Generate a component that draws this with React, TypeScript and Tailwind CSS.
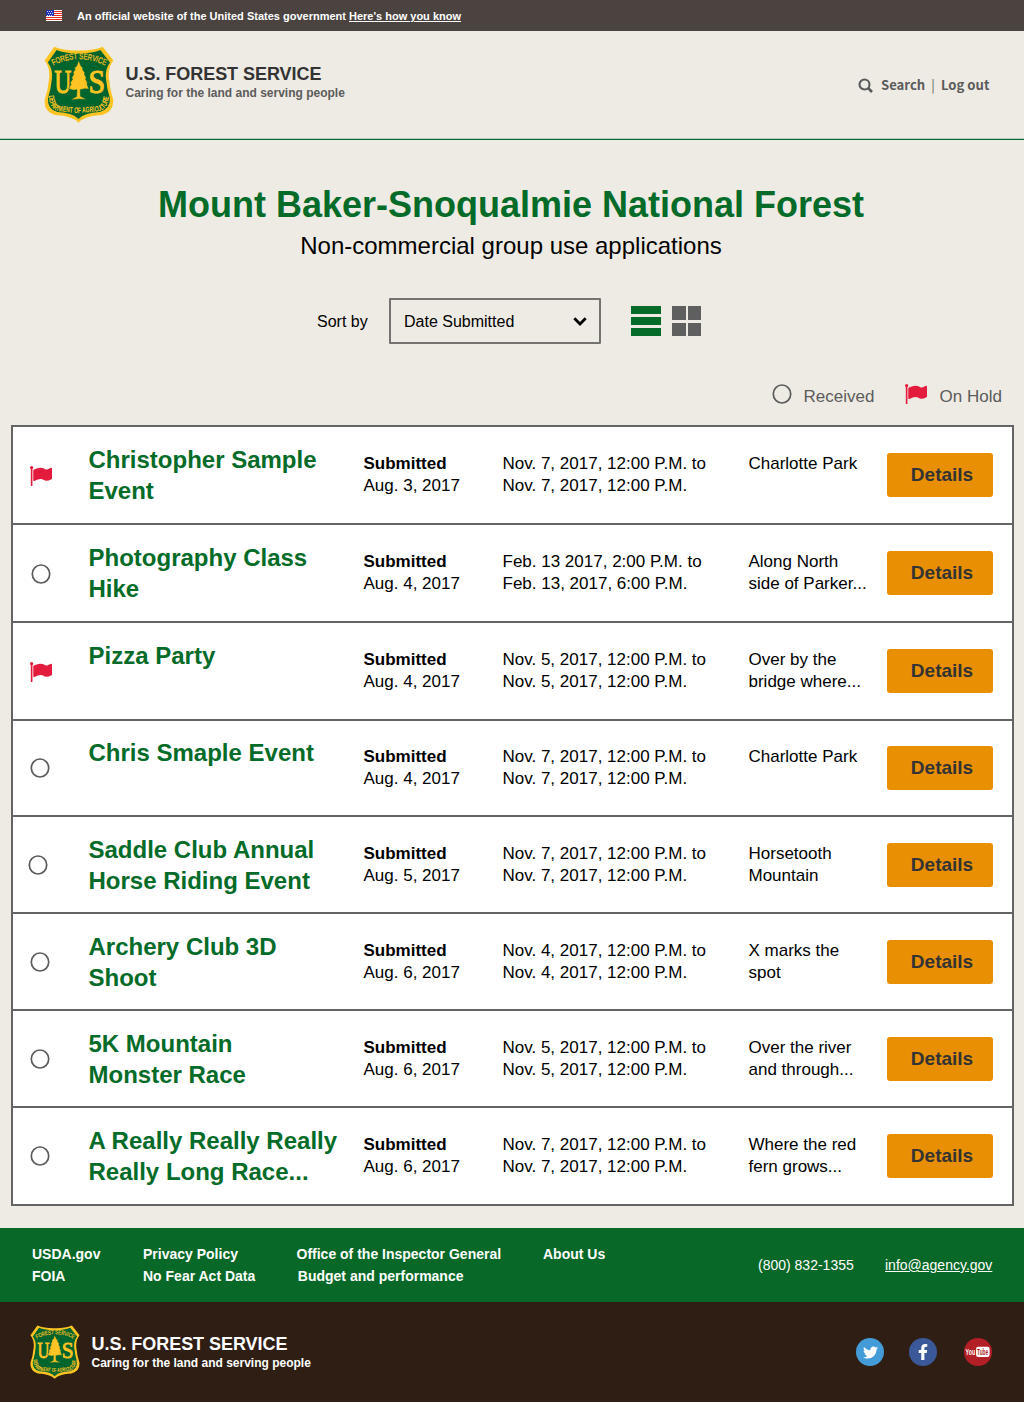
import React from "react";
import { FaFacebookF, FaTwitter } from "react-icons/fa";

type Status = "hold" | "received";

interface Application {
  name: string[];
  status: Status;
  submitted: string;
  dates: string[];
  place: string[];
  rowClass: string;
  iconClass: string;
}

const applications: Application[] = [
  { name: ["Christopher Sample", "Event"], status: "hold", submitted: "Aug. 3, 2017", dates: ["Nov. 7, 2017, 12:00 P.M. to", "Nov. 7, 2017, 12:00 P.M."], place: ["Charlotte Park"], rowClass: "h-[98px] pt-[17px]", iconClass: "ml-[17.4px] -mt-[0.5px]" },
  { name: ["Photography Class", "Hike"], status: "received", submitted: "Aug. 4, 2017", dates: ["Feb. 13 2017, 2:00 P.M. to", "Feb. 13, 2017, 6:00 P.M."], place: ["Along North", "side of Parker..."], rowClass: "h-[98px] pt-[17px]", iconClass: "ml-[18.5px]" },
  { name: ["Pizza Party"], status: "hold", submitted: "Aug. 4, 2017", dates: ["Nov. 5, 2017, 12:00 P.M. to", "Nov. 5, 2017, 12:00 P.M."], place: ["Over by the", "bridge where..."], rowClass: "h-[98px] pt-[17px]", iconClass: "ml-[17.4px] -mt-[0.5px]" },
  { name: ["Chris Smaple Event"], status: "received", submitted: "Aug. 4, 2017", dates: ["Nov. 7, 2017, 12:00 P.M. to", "Nov. 7, 2017, 12:00 P.M."], place: ["Charlotte Park"], rowClass: "h-[96px] pt-[16px]", iconClass: "ml-[17.6px] -mt-[1px]" },
  { name: ["Saddle Club Annual", "Horse Riding Event"], status: "received", submitted: "Aug. 5, 2017", dates: ["Nov. 7, 2017, 12:00 P.M. to", "Nov. 7, 2017, 12:00 P.M."], place: ["Horsetooth", "Mountain"], rowClass: "h-[97px] pt-[17px]", iconClass: "ml-[15.6px] -mt-[1px]" },
  { name: ["Archery Club 3D", "Shoot"], status: "received", submitted: "Aug. 6, 2017", dates: ["Nov. 4, 2017, 12:00 P.M. to", "Nov. 4, 2017, 12:00 P.M."], place: ["X marks the", "spot"], rowClass: "h-[97px] pt-[17px]", iconClass: "ml-[17.6px] -mt-[1px]" },
  { name: ["5K Mountain", "Monster Race"], status: "received", submitted: "Aug. 6, 2017", dates: ["Nov. 5, 2017, 12:00 P.M. to", "Nov. 5, 2017, 12:00 P.M."], place: ["Over the river", "and through..."], rowClass: "h-[97px] pt-[17px]", iconClass: "ml-[17.6px] -mt-[1px]" },
  { name: ["A Really Really Really", "Really Long Race..."], status: "received", submitted: "Aug. 6, 2017", dates: ["Nov. 7, 2017, 12:00 P.M. to", "Nov. 7, 2017, 12:00 P.M."], place: ["Where the red", "fern grows..."], rowClass: "h-[98px] pt-[17px]", iconClass: "ml-[17.6px] -mt-[1px]" },
];

function UsFlag() {
  return (
    <svg className="h-[11px] w-4" viewBox="0 0 16 11" shapeRendering="crispEdges">
      <rect width="16" height="11" fill="#fff" />
      {[1, 3, 5, 7, 9].map((y) => (
        <rect key={y} y={y} width="16" height="1" fill="#e8311c" />
      ))}
      <rect width="8" height="6" fill="#1f33b5" />
      {[1, 3, 5].map((y) =>
        [1, 3, 5].map((x) => <rect key={`${x}-${y}`} x={x + (y === 3 ? 1 : 0)} y={y} width="1" height="1" fill="#c9d0f2" />)
      )}
    </svg>
  );
}

function Shield({ id, className }: { id: string; className: string }) {
  const outline =
    "M10.3 .7 Q20 4.8 34.5 4.5 Q49 4.8 58.7 .7 L69.4 14.5 Q63.5 22 65 33 Q66 44 69.3 54 Q69.8 66 58 69 Q40 70 34.5 76.7 Q29 70 11 69 Q-.2 66 .7 54 Q4 44 5 33 Q6.5 22 .6 14.5 Z";
  return (
    <svg className={className} viewBox="0 0 70 77" preserveAspectRatio="none">
      <path d={outline} fill="#ffc423" />
      <path d={outline} fill="#00642d" transform="translate(3.3 3.3) scale(.904 .908)" />
      <path id={`${id}-top`} d="M9.3 19.6 Q34.5 6.5 61.5 19.6" fill="none" />
      <path id={`${id}-bottom`} d="M4.6 49.5 Q5.5 65.5 17 65.6 L34.5 67.2 L52 65.6 Q64 65.5 65 49" fill="none" />
      <g fill="#ffc423">
        <text fontFamily="Liberation Sans" fontSize="8.4" stroke="#ffc423" strokeWidth=".2">
          <textPath href={`#${id}-top`} textLength="54" lengthAdjust="spacingAndGlyphs">FOREST SERVICE</textPath>
        </text>
        <text fontFamily="Liberation Sans" fontSize="8" fontWeight="bold">
          <textPath href={`#${id}-bottom`} textLength="80" lengthAdjust="spacingAndGlyphs">DEPARTMENT OF AGRICULTURE</textPath>
        </text>
        <text transform="translate(10.6 46.6) scale(.68 1)" fontFamily="Liberation Serif" fontSize="34" stroke="#ffc423" strokeWidth="1.2">U</text>
        <text transform="translate(44.4 46.6) scale(.88 1)" fontFamily="Liberation Serif" fontSize="34" stroke="#ffc423" strokeWidth="1.1">S</text>
        <path
          stroke="#00642d"
          strokeWidth=".5"
          d="M34.7 14.5 L36.9 20 L39 22 L38.4 23.2 L41 27 L40.2 28 L42.4 32 L41.4 33 L43.6 37 L42.8 38 L45 43 L40.5 42.8 L36.2 43.7 L36.4 50.3 L42.8 53.6 L35 53 L26.6 54 L32.6 50.5 L33 43.7 L29.5 44.2 L24.6 42.7 L27.2 38 L26 37 L28.8 33 L27.6 32 L30 28 L28.9 27 L31.2 23.2 L30.4 22 L32.8 20 Z"
        />
      </g>
    </svg>
  );
}

function HoldFlag() {
  return (
    <svg className="h-[20px] w-[22px]" viewBox="64 128 1728 1536" preserveAspectRatio="none" fill="#e31c3d">
      <path d="M320 256q0 72-64 110v1266q0 13-9.5 22.5t-22.5 9.5h-64q-13 0-22.5-9.5t-9.5-22.5v-1266q-64-38-64-110 0-53 37.5-90.5t90.5-37.5 90.5 37.5 37.5 90.5zm1472 64v763q0 25-12.5 38.5t-39.5 27.5q-215 116-369 116-61 0-123.5-22t-108.5-48-115.5-48-142.5-22q-192 0-464 146-17 9-33 9-26 0-45-19t-19-45v-742q0-32 31-55 21-14 79-43 236-120 421-120 107 0 200 29t219 88q38 19 88 19 54 0 117.5-21t110-47 88-47 54.5-21q26 0 45 19t19 45z" />
    </svg>
  );
}

function ReceivedRing() {
  return (
    <svg className="h-5 w-5" viewBox="0 0 20 20" fill="none" stroke="#5b5b5b" strokeWidth="1.7">
      <ellipse cx="10" cy="10" rx="8.7" ry="9" />
    </svg>
  );
}

function Brand({ id, shield, nameClass, tagClass }: { id: string; shield: string; nameClass: string; tagClass: string }) {
  return (
    <div className="flex items-start gap-[11.5px]">
      <Shield id={id} className={shield} />
      <div className="font-bold">
        <div className={`text-[18px] leading-5 tracking-[-0.04px] ${nameClass}`}>U.S. FOREST SERVICE</div>
        <div className={`text-[12px] leading-[18px] ${tagClass}`}>Caring for the land and serving people</div>
      </div>
    </div>
  );
}

function Row({ app, last }: { app: Application; last: boolean }) {
  return (
    <div className={`flex items-start ${app.rowClass} ${last ? "" : "border-b-2 border-[#646464]"}`}>
      <div className="w-[76px] shrink-0 pt-[22px]">
        <div className={app.iconClass}>{app.status === "hold" ? <HoldFlag /> : <ReceivedRing />}</div>
      </div>
      <div className="w-[275px] shrink-0 whitespace-nowrap text-[24px] font-bold leading-[31px] text-[#046b28]">
        {app.name.map((line) => (
          <div key={line}>{line}</div>
        ))}
      </div>
      <div className="w-[139px] shrink-0 pt-[9px] text-[17px] leading-[22px]">
        <div className="font-bold">Submitted</div>
        <div>{app.submitted}</div>
      </div>
      <div className="w-[246px] shrink-0 pt-[9px] text-[17px] leading-[22px]">
        {app.dates.map((line) => (
          <div key={line}>{line}</div>
        ))}
      </div>
      <div className="w-[138.5px] shrink-0 whitespace-nowrap pt-[9px] text-[17px] leading-[22px]">
        {app.place.map((line) => (
          <div key={line}>{line}</div>
        ))}
      </div>
      <button className="mt-[9px] h-11 w-[106px] shrink-0 rounded-[3px] bg-[#e88f04] pl-1 text-[19px] font-bold text-[#333]">Details</button>
    </div>
  );
}

export default function App() {
  return (
    <div className="h-[1402px] w-[1024px] overflow-hidden bg-[#eeebe4] font-['Liberation_Sans',Arial,sans-serif] text-black">
      <div className="flex h-[31px] items-center bg-[#4a433f] pl-[46px] text-[11px] font-bold text-white">
        <UsFlag />
        <span className="ml-[15px] mt-[2px]">
          An official website of the United States government <a className="underline">Here's how you know</a>
        </span>
      </div>

      <header className="flex h-[109px] items-start justify-between border-b border-[#046b38] pl-11 pr-[35px] pt-[15px] shadow-[inset_0_-1px_0_#b9cdb9]">
        <Brand id="header" shield="h-[77px] w-[70px]" nameClass="mt-[18px] text-[#333]" tagClass="text-[#5b5b5b]" />
        <div className="mt-[27px] flex items-center font-['Noto_Sans_CJK_JP',sans-serif] text-[13.1px] font-bold leading-6 text-[#5b5b5b]">
          <svg className="mr-2 size-[15px]" viewBox="0 0 15 15" fill="none" stroke="#5b5b5b" strokeWidth="2.1">
            <circle cx="6.5" cy="6.5" r="5" />
            <path d="M10 10l4 4" strokeWidth="2.6" />
          </svg>
          <span className="w-11 whitespace-nowrap">Search</span>
          <span className="w-4 text-center font-normal">|</span>
          <span className="w-12 whitespace-nowrap">Log out</span>
        </div>
      </header>

      <main>
        <h1 className="pr-[2px] pt-[43px] text-center text-[36px] font-bold leading-[44px] text-[#046b28]">Mount Baker-Snoqualmie National Forest</h1>
        <p className="mt-[4px] pr-[2px] text-center text-[24px] leading-[30px]">Non-commercial group use applications</p>

        <div className="mt-[37px] flex h-[46px] items-center pl-[317px]">
          <label className="mt-px w-[72px] text-[16px]">Sort by</label>
          <div className="flex h-[46px] w-[212px] items-center justify-between rounded-[1px] border-2 border-[#747371] pl-[13px] pr-[12.5px] text-[16px]">
            <span className="mt-px">Date Submitted</span>
            <svg className="h-[9px] w-[14px]" viewBox="0 0 14 9" fill="none" stroke="#000" strokeWidth="2.8">
              <path d="M1.3 1.3l5.7 5.7 5.7-5.7" />
            </svg>
          </div>
          <div className="ml-[30px] flex h-[30px] w-[30px] flex-col justify-between">
            <div className="h-2 bg-[#046b28]" />
            <div className="h-2 bg-[#046b28]" />
            <div className="h-2 bg-[#046b28]" />
          </div>
          <div className="ml-[11px] grid h-[30px] w-[29px] grid-cols-2 grid-rows-2 gap-x-[2px] gap-y-[3px]">
            <div className="bg-[#5f5f5f]" />
            <div className="bg-[#5f5f5f]" />
            <div className="bg-[#5f5f5f]" />
            <div className="bg-[#5f5f5f]" />
          </div>
        </div>

        <div className="mt-[40px] flex h-5 items-center pl-[771.5px] text-[17px] text-[#5b5b5b]">
          <ReceivedRing />
          <span className="ml-3 mt-[5px] w-[101.5px]">Received</span>
          <HoldFlag />
          <span className="ml-[12.5px] mt-[5px] whitespace-nowrap">On Hold</span>
        </div>

        <section className="ml-[10.5px] mt-[21px] h-[781px] w-[1003.5px] border-2 border-[#646464] bg-white">
          {applications.map((app, i) => (
            <Row key={i} app={app} last={i === applications.length - 1} />
          ))}
        </section>
      </main>

      <footer className="mt-[22px]">
        <div className="flex h-[74px] bg-[#076828] pl-8 pt-[15px] text-[14px] leading-[22px] text-white">
          <div className="w-[111px] font-bold">
            <div>USDA.gov</div>
            <div>FOIA</div>
          </div>
          <div className="w-[153.5px] font-bold">
            <div>Privacy Policy</div>
            <div>No Fear Act Data</div>
          </div>
          <div className="w-[246.5px] font-bold">
            <div>Office of the Inspector General</div>
            <div className="pl-[1.3px]">Budget and performance</div>
          </div>
          <div className="w-[215px] font-bold">About Us</div>
          <div className="mt-[11px] w-[127px]">(800) 832-1355</div>
          <div className="mt-[11px] underline">info@agency.gov</div>
        </div>
        <div className="flex h-[100px] items-start justify-between bg-[#2e1e13] pl-[30px] pr-8 pt-[23px] text-white">
          <Brand id="footer" shield="h-[54px] w-[50px]" nameClass="mt-[9px]" tagClass="" />
          <div className="mt-[13px] flex">
            <div className="flex size-7 items-center justify-center rounded-full bg-[#439cd8]">
              <FaTwitter className="size-[15px]" />
            </div>
            <div className="ml-[25px] flex size-7 items-center justify-center rounded-full bg-[#3b5998]">
              <FaFacebookF className="size-4" />
            </div>
            <svg className="ml-[27px] size-7" viewBox="0 0 28 28">
              <circle cx="14" cy="14" r="14" fill="#b31f26" />
              <rect x="12" y="8.8" width="13.6" height="10.2" rx="2.2" fill="#fff" />
              <g fontFamily="Liberation Sans" fontWeight="bold" fontSize="9.5">
                <text transform="translate(1.6 17.2) scale(.55 1)" fill="#fff">You</text>
                <text transform="translate(13.1 17.4) scale(.5 1)" fill="#b31f26">Tube</text>
              </g>
            </svg>
          </div>
        </div>
      </footer>
    </div>
  );
}
